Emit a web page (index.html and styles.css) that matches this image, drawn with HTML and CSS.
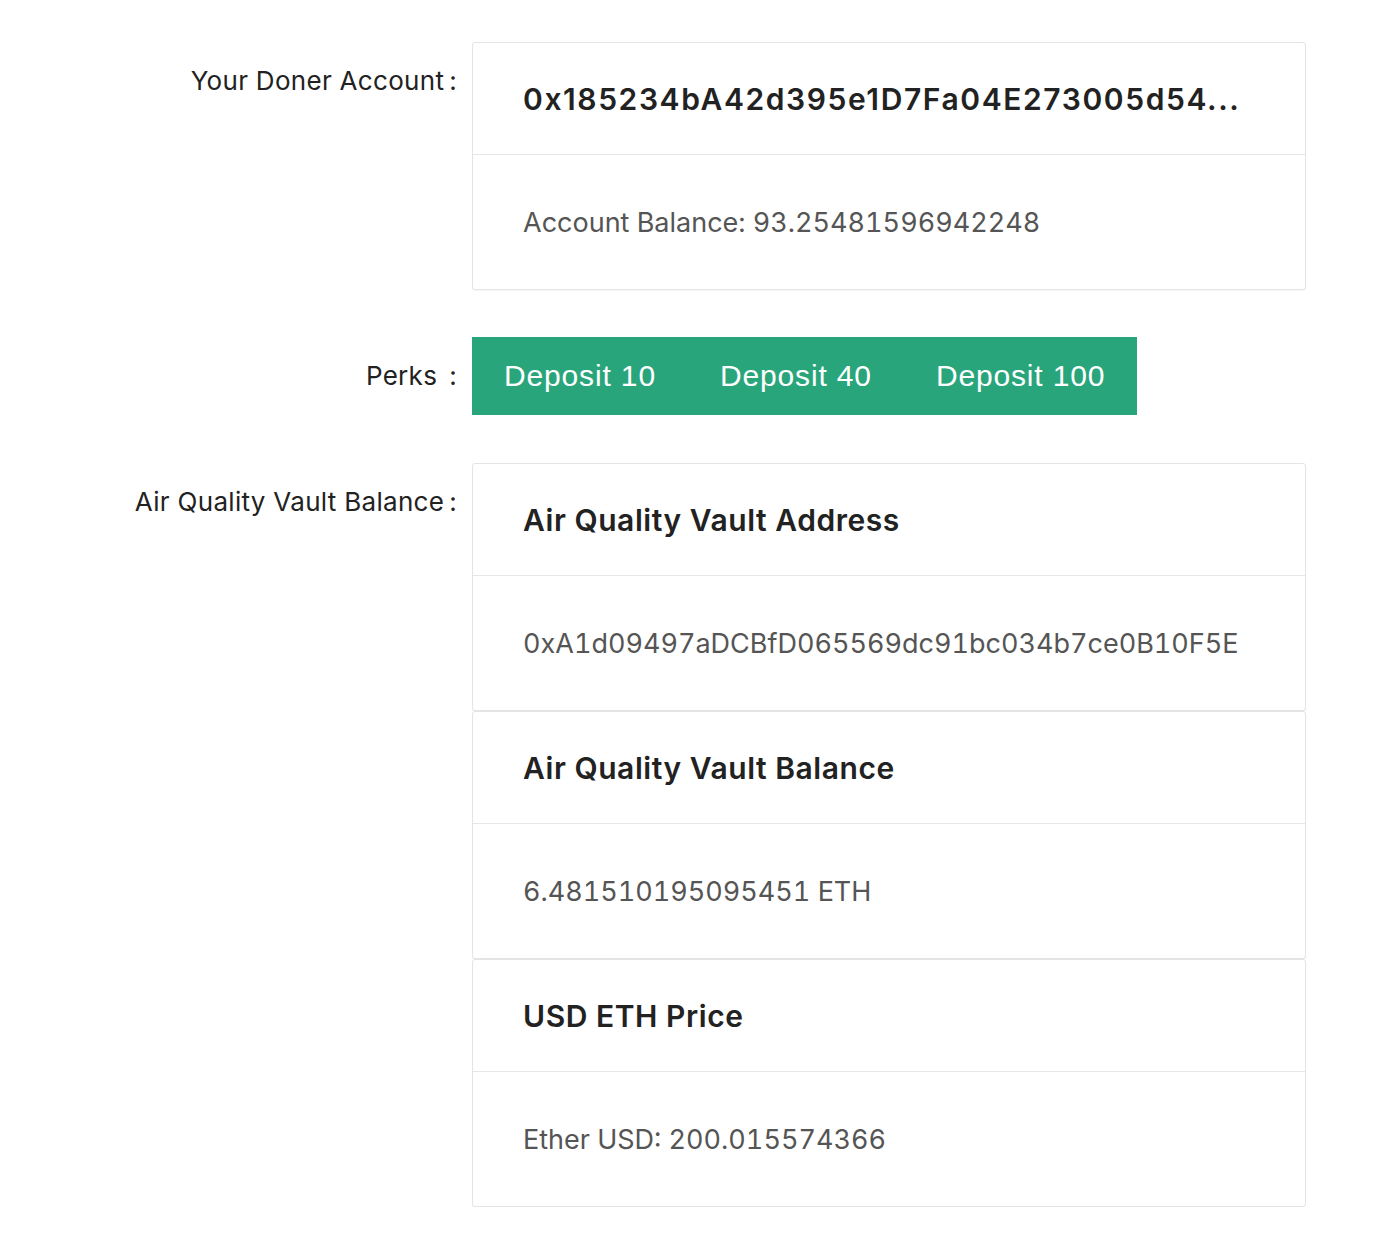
FILE: index.html
```html
<!DOCTYPE html>
<html>
<head>
<meta charset="utf-8">
<link rel="stylesheet" href="styles.css">
</head>
<body>
<div class="form">
  <div class="row">
    <div class="label">Your Doner Account<span class="colon">:</span></div>
    <div class="field">
      <div class="card">
        <div class="card-header card-header-hex">0x185234bA42d395e1D7Fa04E273005d54...</div>
        <div class="card-body">Account Balance: 93.25481596942248</div>
      </div>
    </div>
  </div>
  <div class="row">
    <div class="label">Perks<span class="colon colon-wide">:</span></div>
    <div class="field">
      <div class="buttons">
        <button class="btn">Deposit 10</button>
        <button class="btn">Deposit 40</button>
        <button class="btn">Deposit 100</button>
      </div>
    </div>
  </div>
  <div class="row row-vault">
    <div class="label">Air Quality Vault Balance<span class="colon">:</span></div>
    <div class="field">
      <div class="card">
        <div class="card-header">Air Quality Vault Address</div>
        <div class="card-body">0xA1d09497aDCBfD065569dc91bc034b7ce0B10F5E</div>
      </div>
      <div class="card">
        <div class="card-header">Air Quality Vault Balance</div>
        <div class="card-body">6.481510195095451 ETH</div>
      </div>
      <div class="card">
        <div class="card-header">USD ETH Price</div>
        <div class="card-body">Ether USD: 200.015574366</div>
      </div>
    </div>
  </div>
</div>
</body>
</html>
```
FILE: styles.css
```css
html, body {
  margin: 0;
  padding: 0;
  background: #ffffff;
}
body {
  font-family: Inter, "Liberation Sans", Arial, sans-serif;
  color: #222;
}
.form {
  padding-top: 42px;
  display: flex;
  flex-direction: column;
  gap: 47px;
}
.row {
  display: flex;
  align-items: flex-start;
  gap: 15px;
}
.row-vault {
  margin-top: 1px;
}
.label {
  width: 457px;
  flex: none;
  text-align: right;
  font-size: 26px;
  letter-spacing: 0.3px;
  line-height: 30px;
  padding-top: 24px;
  color: #222;
}
.colon {
  margin-left: 5px;
}
.colon-wide {
  margin-left: 12px;
}
.field {
  width: 834px;
  flex: none;
  display: flex;
  flex-direction: column;
}
.card {
  border: 1px solid #e4e4e4;
  border-radius: 3px;
  background: #fff;
  box-shadow: 0 1px 1px rgba(0, 0, 0, 0.04);
}
.card-header {
  height: 112px;
  box-sizing: border-box;
  padding: 0 50px;
  display: flex;
  align-items: center;
  font-size: 30px;
  font-weight: 600;
  letter-spacing: 0.55px;
  color: #222;
  border-bottom: 1px solid #e6e6e6;
  white-space: nowrap;
}
.card-header-hex {
  letter-spacing: 1.6px;
}
.card-body {
  height: 134px;
  box-sizing: border-box;
  padding: 0 50px;
  display: flex;
  align-items: center;
  font-size: 27px;
  font-variant-numeric: tabular-nums;
  color: #555;
  white-space: nowrap;
}
.buttons {
  display: flex;
  align-self: flex-start;
  background: #29a57b;
}
.btn {
  background: #29a57b;
  color: #fff;
  border: none;
  margin: 0;
  height: 78px;
  padding: 0 32px;
  font-family: "Liberation Sans", Arial, sans-serif;
  font-size: 30px;
  letter-spacing: 0.85px;
  cursor: pointer;
}
```
